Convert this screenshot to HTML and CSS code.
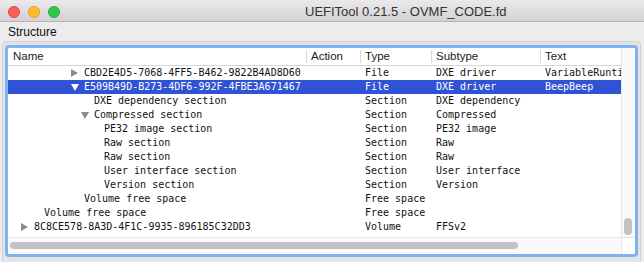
FILE: index.html
```html
<!DOCTYPE html>
<html lang="en">
<head>
  <meta charset="UTF-8">
  <title>UEFITool 0.21.5 - OVMF_CODE.fd</title>
  <link rel="stylesheet" href="styles.css">
</head>
<body>
<div class="window">
  <div class="titlebar">
    <div class="lights">
      <span class="light red"></span>
      <span class="light yellow"></span>
      <span class="light green"></span>
    </div>
    <div class="title">UEFITool 0.21.5 - OVMF_CODE.fd</div>
  </div>

  <div class="content">
    <div class="group-label">Structure</div>
    <div class="group">
      <div class="tree">
        <div class="tree-main">
          <div class="viewport">
            <div class="header">
              <div class="head-cell">Name</div>
              <div class="head-cell divided">Action</div>
              <div class="head-cell divided">Type</div>
              <div class="head-cell divided">Subtype</div>
              <div class="head-cell divided">Text</div>
            </div>

            <div class="row">
              <div class="cell name depth-5"><span class="arrow closed"></span>CBD2E4D5-7068-4FF5-B462-9822B4AD8D60</div>
              <div class="cell"></div>
              <div class="cell">File</div>
              <div class="cell">DXE driver</div>
              <div class="cell">VariableRuntimeDxe</div>
            </div>
            <div class="row selected">
              <div class="cell name depth-5"><span class="arrow open"></span>E509B49D-B273-4DF6-992F-4FBE3A671467</div>
              <div class="cell"></div>
              <div class="cell">File</div>
              <div class="cell">DXE driver</div>
              <div class="cell">BeepBeep</div>
            </div>
            <div class="row">
              <div class="cell name depth-6">DXE dependency section</div>
              <div class="cell"></div>
              <div class="cell">Section</div>
              <div class="cell">DXE dependency</div>
              <div class="cell"></div>
            </div>
            <div class="row">
              <div class="cell name depth-6"><span class="arrow open"></span>Compressed section</div>
              <div class="cell"></div>
              <div class="cell">Section</div>
              <div class="cell">Compressed</div>
              <div class="cell"></div>
            </div>
            <div class="row">
              <div class="cell name depth-7">PE32 image section</div>
              <div class="cell"></div>
              <div class="cell">Section</div>
              <div class="cell">PE32 image</div>
              <div class="cell"></div>
            </div>
            <div class="row">
              <div class="cell name depth-7">Raw section</div>
              <div class="cell"></div>
              <div class="cell">Section</div>
              <div class="cell">Raw</div>
              <div class="cell"></div>
            </div>
            <div class="row">
              <div class="cell name depth-7">Raw section</div>
              <div class="cell"></div>
              <div class="cell">Section</div>
              <div class="cell">Raw</div>
              <div class="cell"></div>
            </div>
            <div class="row">
              <div class="cell name depth-7">User interface section</div>
              <div class="cell"></div>
              <div class="cell">Section</div>
              <div class="cell">User interface</div>
              <div class="cell"></div>
            </div>
            <div class="row">
              <div class="cell name depth-7">Version section</div>
              <div class="cell"></div>
              <div class="cell">Section</div>
              <div class="cell">Version</div>
              <div class="cell"></div>
            </div>
            <div class="row">
              <div class="cell name depth-5">Volume free space</div>
              <div class="cell"></div>
              <div class="cell">Free space</div>
              <div class="cell"></div>
              <div class="cell"></div>
            </div>
            <div class="row">
              <div class="cell name depth-1">Volume free space</div>
              <div class="cell"></div>
              <div class="cell">Free space</div>
              <div class="cell"></div>
              <div class="cell"></div>
            </div>
            <div class="row">
              <div class="cell name depth-0"><span class="arrow closed"></span>8C8CE578-8A3D-4F1C-9935-896185C32DD3</div>
              <div class="cell"></div>
              <div class="cell">Volume</div>
              <div class="cell">FFSv2</div>
              <div class="cell"></div>
            </div>
          </div>

          <!-- vertical scroll bar -->
          <div class="vscroll"><div class="vthumb"></div></div>
        </div>

        <!-- horizontal scroll bar -->
        <div class="tree-bottom">
          <div class="hscroll"><div class="hthumb"></div></div>
          <div class="corner"></div>
        </div>
      </div>
    </div>
  </div>
</div>
</body>
</html>
```

FILE: styles.css
```css
body {
  margin: 0;
  width: 644px;
  height: 262px;
  overflow: hidden;
  background-color: #ececec;
  font-family: "Liberation Sans", Arial, sans-serif;
  color: #1a1a1a;
}

.window {
  height: 262px;
  display: flex;
  flex-direction: column;
}

/* title bar */
.titlebar {
  box-sizing: border-box;
  height: 22px;
  padding-top: 2px;
  display: flex;
  align-items: center;
  background: linear-gradient(#ebe9eb, #d3d1d3);
  border-bottom: 1px solid #b6b4b6;
}

.lights {
  display: flex;
  gap: 8px;
  padding-left: 8px;
}

.light {
  width: 12px;
  height: 12px;
  border-radius: 50%;
  box-sizing: border-box;
}

.red {
  background-color: #fc5f57;
  border: 1px solid #e2463f;
}

.yellow {
  background-color: #fdbc2e;
  border: 1px solid #e0a028;
}

.green {
  background-color: #33c748;
  border: 1px solid #27aa35;
}

.title {
  margin-left: 245px;
  font-size: 13px;
  color: #333;
}

/* main area */
.content {
  flex: 1;
  display: flex;
  flex-direction: column;
}

.group-label {
  height: 19px;
  line-height: 21px;
  padding-left: 8px;
  font-size: 12px;
  color: #111;
}

.group {
  flex: 1;
  margin: 0 3px 0 2px;
  padding: 3px 2px 0 2px;
  border: 1px solid #d2d2d2;
  border-bottom: none;
  border-radius: 4px 4px 0 0;
  background-color: #e4e4e4;
}

.tree {
  height: 206px;
  border: 3px solid #7fb3ef;
  border-radius: 4px;
  background-color: white;
  display: flex;
  flex-direction: column;
}

.tree-main {
  height: 189px;
  display: flex;
}

.viewport {
  width: 613px;
  overflow: hidden;
}

.header,
.row {
  display: grid;
  grid-template-columns: 298px 54px 71px 109px 200px;
  white-space: nowrap;
}

.header {
  height: 17px;
  border-bottom: 1px solid #d6d6d6;
  font-size: 11.5px;
  line-height: 17px;
}

.head-cell {
  padding-left: 5px;
}

.head-cell.divided {
  background: linear-gradient(#d8d8d8, #d8d8d8) left center / 1px 13px no-repeat;
}

.row {
  height: 14px;
  line-height: 14px;
  font-family: "DejaVu Sans Mono", "Liberation Mono", monospace;
  font-size: 10px;
  color: #111;
}

.row.selected {
  background-color: #3053d5;
  color: white;
}

.cell {
  padding-left: 5px;
}

.cell.name {
  display: flex;
  align-items: center;
}

.depth-0 { padding-left: 26px; }
.depth-1 { padding-left: 36px; }
.depth-5 { padding-left: 76px; }
.depth-6 { padding-left: 86px; }
.depth-7 { padding-left: 96px; }

.arrow {
  width: 13px;
  height: 14px;
  margin-left: -13px;
  display: flex;
  align-items: center;
}

.arrow::before {
  content: "";
  width: 0;
  height: 0;
}

.arrow.closed::before {
  border-left: 7px solid #8b8b8b;
  border-top: 4px solid transparent;
  border-bottom: 4px solid transparent;
}

.arrow.open::before {
  border-top: 7px solid #8b8b8b;
  border-left: 4px solid transparent;
  border-right: 4px solid transparent;
}

.selected .arrow.open::before {
  border-top-color: white;
}

/* scroll bars */
.vscroll {
  box-sizing: border-box;
  width: 14px;
  padding: 0 0 2px 2px;
  border-left: 1px solid #e6e6e6;
  background-color: #fafafa;
  display: flex;
  flex-direction: column;
  justify-content: flex-end;
}

.vthumb {
  width: 8px;
  height: 17px;
  border-radius: 4px;
  background-color: #c2c2c2;
}

.tree-bottom {
  height: 17px;
  display: flex;
}

.hscroll {
  box-sizing: border-box;
  width: 613px;
  padding: 4px 0 0 2px;
  border-top: 1px solid #e6e6e6;
  background-color: #fafafa;
}

.hthumb {
  width: 508px;
  height: 7px;
  border-radius: 4px;
  background-color: #c2c2c2;
}

.corner {
  box-sizing: border-box;
  width: 14px;
  border-top: 1px solid #e6e6e6;
  border-left: 1px solid #e6e6e6;
  background-color: white;
}
```
